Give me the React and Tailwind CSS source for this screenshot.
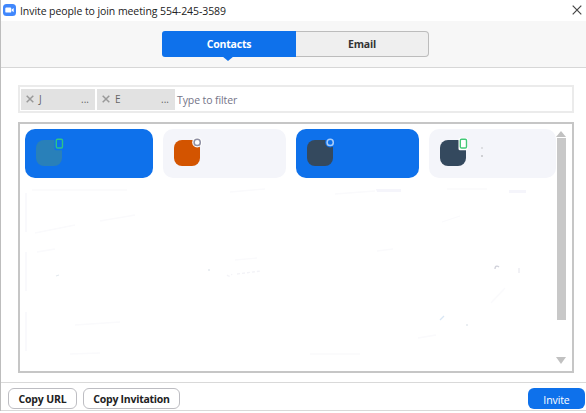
import React from "react";

function Status({ kind, color, halo }) {
  return (
    <svg className="absolute -top-[3px] left-[18px] h-[14px] w-[12px]" viewBox="0 0 12 14" fill="none">
      {kind === "phone" ? (
        <>
          <rect x="0.5" y="0.8" width="9.4" height="12.4" rx="1.5" fill={halo} />
          <rect x="2.3" y="2.2" width="6.2" height="8.8" rx="1.3" stroke={color} strokeWidth="1.4" />
        </>
      ) : (
        <>
          <circle cx="5.2" cy="5.4" r="5" fill={halo} />
          <circle cx="5.2" cy="5.4" r="3.1" stroke={color} strokeWidth="1.5" />
        </>
      )}
    </svg>
  );
}

function Card({ className, avatar, children, ...status }) {
  return (
    <div className={`flex h-[49px] shrink-0 rounded-[10px] pt-[11px] pl-[11px] ${className}`}>
      <div className={`relative h-[26px] w-[26px] rounded-[8px] ${avatar}`}>
        <Status {...status} />
      </div>
      {children}
    </div>
  );
}

function Chip({ label, className }) {
  return (
    <div className={`flex h-[21px] items-center bg-[#e2e2e2] pr-[6px] pl-[5px] text-[10px] text-[#666] ${className}`}>
      <svg className="h-[8px] w-[8px]" viewBox="0 0 8 8" stroke="#999" strokeWidth="1.5">
        <path d="M.7.7 7.3 7.3M7.3.7.7 7.3" />
      </svg>
      <span className="ml-[5px] pt-px">{label}</span>
      <span className="ml-auto pt-px">...</span>
    </div>
  );
}

function Smudges() {
  return (
    <svg className="mt-[10px] h-[170px] w-[530px] shrink-0" viewBox="0 0 530 170" fill="none" stroke="#fafafc" strokeWidth="1.3">
      <path d="M1 5v39M1 64v39M1 124v39" stroke="#f6f6fb" />
      <path d="M7 2h95M205 4l35-3M310 6l40-3M422 1h40M45 166l30-1M285 166h50M75 33l35-6M10 45l40-8M12 64l18-3M210 72l22-2M50 137l45-3" />
      <path d="M351 1h25v3h-24zM484 2h17v3h-17z" fill="#f5f5fb" stroke="none" />
      <path d="m417 34 18-6M480 100l-14 15M393 150l18-3M352 63l16-2" />
      <path d="m415 132 4-4" stroke="#d8e6f4" />
      <path d="M470 81c0-4 3-3 4-2" stroke="#d0d1da" />
      <path d="M494 80v5" stroke="#eaeaf0" />
      <path d="m31 88 3-1M183 82h2M441 137h2" stroke="#e3e9ee" />
      <path d="M202 87c2 2 4 1 5-1M212 86l24-3" strokeDasharray="3 2" stroke="#f3f3f7" />
    </svg>
  );
}

export default function App() {
  return (
    <div className="flex h-[413px] w-[586px] flex-col overflow-hidden bg-white font-['Open_Sans','Noto_Sans',sans-serif] text-[#222]">
      <div className="flex h-[411px] flex-col border-l border-[#bdbdbd]">
        <header className="flex h-[21px] shrink-0 items-center pr-[4px] pl-[2px]">
          <svg className="mb-[2px] h-[12px] w-[13px]" viewBox="0 0 13 12">
            <rect width="13" height="12" rx="3.5" fill="#4087fc" />
            <rect x="2.3" y="3.6" width="6" height="5" rx="1.2" fill="#fff" />
            <path d="m8.7 5.4 2-1.4v4.2l-2-1.4z" fill="#fff" />
          </svg>
          <h1 className="ml-[4px] text-[10.5px] leading-[18px] tracking-[-0.075px] whitespace-nowrap">Invite people to join meeting 554-245-3589</h1>
          <svg className="mb-[2px] ml-auto h-[10px] w-[10px]" viewBox="0 0 10 10" stroke="#444" strokeWidth="1.2">
            <path d="m.7.7 8.6 8.6M9.3.7.7 9.3" />
          </svg>
        </header>

        <nav className="flex h-[47px] shrink-0 border-b border-[#d7d7d7] bg-[#f7f7f7] pt-[10px] pl-[161px] text-[10.5px] font-bold tracking-[-0.2px]">
          <div className="relative flex h-[26px] w-[134px] items-center justify-center rounded-l-[3px] bg-[#0e71eb] pt-px text-white">
            Contacts
            <svg className="absolute top-[25px] left-[60px] h-[5px] w-[12px]" viewBox="0 0 12 5">
              <path d="M0 0h12L6 5z" fill="#0e71eb" />
            </svg>
          </div>
          <div className="flex h-[26px] w-[133px] items-center justify-center rounded-r-[4px] border border-l-0 border-[#bcbcbc] bg-[#efefef] pt-[2px] text-[#333]">Email</div>
        </nav>

        <main className="flex flex-1 flex-col pt-[17px] pl-[17px]">
          <div className="flex h-[28px] w-[556px] items-center border-2 border-[#ebebeb] pl-px">
            <Chip label="J" className="w-[74px]" />
            <Chip label="E" className="ml-[2px] w-[78px]" />
            <span className="ml-[2px] pt-[4px] text-[10.5px] tracking-[-0.1px] text-[#747487]">Type to filter</span>
          </div>

          <div className="mt-[9px] flex h-[251px] w-[556px] border-2 border-[#c6c6c6] pt-[5px] pl-[5px]">
            <div className="w-[531px]">
              <div className="flex">
                <Card className="w-[128px] bg-[#0e71eb]" avatar="bg-[#2980b9]" kind="phone" color="#2fc486" halo="#0e71eb" />
                <Card className="ml-[10px] w-[123px] bg-[#f4f5fa]" avatar="bg-[#d35400]" kind="ring" color="#8f90a4" halo="#fff" />
                <Card className="ml-[10px] w-[123px] bg-[#0e71eb]" avatar="bg-[#34495e]" kind="ring" color="#a9ccf8" halo="#0e71eb" />
                <Card className="ml-[10px] w-[127px] bg-[#f4f5fa]" avatar="bg-[#34495e]" kind="phone" color="#44c978" halo="#fff">
                  <div className="mt-[7px] ml-[15px] flex h-[10px] w-[2px] flex-col justify-between">
                    <i className="h-[2px] bg-[#dddee2]" />
                    <i className="h-[2px] bg-[#cfd0d4]" />
                  </div>
                </Card>
              </div>
              <Smudges />
            </div>
            <div className="flex h-[235px] w-[10px] flex-col items-center pt-[2px]">
              <svg className="h-[6px] w-[10px] shrink-0" viewBox="0 0 10 6"><path d="M5 0 10 6H0z" fill="#c1c1c1" /></svg>
              <div className="mt-px h-[182px] w-[9px] shrink-0 bg-[#c8c8c8]" />
              <svg className="mt-auto h-[7px] w-[10px] shrink-0" viewBox="0 0 10 7"><path d="M0 0h10L5 7z" fill="#c1c1c1" /></svg>
            </div>
          </div>
        </main>

        <footer className="flex h-[29px] shrink-0 items-center border-y border-[#d9d9d9] pt-[4px] pl-[7px] text-[10.5px]">
          <button className="h-[21px] w-[69px] rounded-[6px] border border-[#bdbdc2] pt-[2px] leading-[17px] font-bold tracking-[-0.15px] whitespace-nowrap">Copy URL</button>
          <button className="ml-[6px] h-[21px] w-[97px] rounded-[6px] border border-[#bdbdc2] pt-[2px] leading-[17px] font-bold tracking-[-0.25px] whitespace-nowrap">Copy Invitation</button>
          <button className="mr-[1px] ml-auto h-[21px] w-[57px] rounded-[6px] bg-[#0e71eb] pt-[3px] leading-[17px] tracking-[-0.1px] text-white">Invite</button>
        </footer>
      </div>
    </div>
  );
}
